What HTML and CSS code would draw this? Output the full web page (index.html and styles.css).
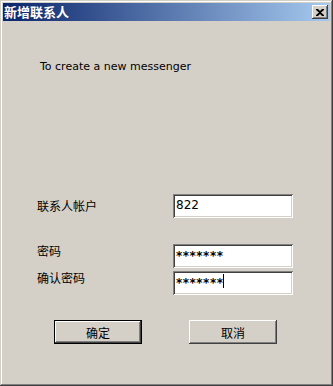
FILE: index.html
```html
<!DOCTYPE html>
<html>
<head>
<meta charset="utf-8">
<link rel="stylesheet" href="styles.css">
</head>
<body>
<div class="window">
  <div class="titlebar">
    <span class="title">新增联系人</span>
    <span class="close"><svg width="8" height="7" viewBox="0 0 8 7"><path d="M0 0h2l2 2 2-2h2v1L5 3.5 8 6v1H6L4 5 2 7H0V6l3-2.5L0 1z" fill="#000"/></svg></span>
  </div>
  <div class="content">
    <div class="message">To create a new messenger</div>
    <div class="form">
      <div class="row">
        <div class="label">联系人帐户</div>
        <div class="field">822</div>
      </div>
      <div class="row row2">
        <div class="label up">密码</div>
        <div class="field pw">*******</div>
      </div>
      <div class="row row3">
        <div class="label up">确认密码</div>
        <div class="field pw">*******<span class="caret"></span></div>
      </div>
    </div>
    <div class="buttons">
      <div class="btn default"><span>确定</span></div>
      <div class="btn"><span>取消</span></div>
    </div>
  </div>
</div>
</body>
</html>
```
FILE: styles.css
```css
html, body {
  margin: 0;
  padding: 0;
  background: #d4d0c8;
}
.window {
  width: 333px;
  height: 386px;
  box-sizing: border-box;
  padding: 3px;
  background: #d4d0c8;
  box-shadow: inset -1px -1px #404040, inset 1px 1px #d4d0c8, inset -2px -2px #808080, inset 2px 2px #ffffff;
  font-family: "DejaVu Sans", "Noto Sans CJK SC", sans-serif;
  color: #000;
  display: flex;
  flex-direction: column;
}
.titlebar {
  height: 18px;
  background: linear-gradient(to right, #0a246a, #a6caf0);
  display: flex;
  align-items: center;
  justify-content: space-between;
  padding: 0 2px 0 1px;
}
.title {
  color: #fff;
  font-family: "Noto Sans CJK SC", sans-serif;
  font-weight: bold;
  font-size: 13px;
  line-height: 18px;
}
.close {
  width: 16px;
  height: 14px;
  box-sizing: border-box;
  background: #d4d0c8;
  box-shadow: inset -1px -1px #404040, inset 1px 1px #ffffff, inset -2px -2px #808080;
  display: flex;
  align-items: center;
  justify-content: center;
}
.content {
  padding-left: 34px;
}
.message {
  margin-top: 39px;
  margin-left: 3px;
  font-size: 11px;
  line-height: 14px;
}
.form {
  margin-top: 120px;
}
.row {
  display: flex;
  height: 24px;
}
.row2 { margin-top: 26px; }
.row3 { margin-top: 3px; }
.label {
  width: 136px;
  font-family: "Noto Sans CJK SC", sans-serif;
  font-size: 12px;
  line-height: 24px;
}
.label.up {
  line-height: 14px;
}
.field {
  width: 120px;
  height: 24px;
  box-sizing: border-box;
  background: #fff;
  box-shadow: inset 1px 1px #808080, inset -1px -1px #ffffff, inset 2px 2px #404040, inset -2px -2px #d4d0c8;
  padding: 3px 0 0 3px;
  font-size: 12px;
  line-height: 16px;
  display: flex;
  align-items: flex-start;
}
.field.pw {
  font-family: "DejaVu Sans", sans-serif;
  font-size: 12px;
  font-weight: bold;
  letter-spacing: 0.5px;
  line-height: 16px;
  padding-top: 4px;
}
.caret {
  display: inline-block;
  width: 1px;
  height: 14px;
  background: #000;
  margin-left: 0;
  margin-top: -1px;
}
.buttons {
  display: flex;
  margin-top: 25px;
  padding-left: 17px;
  gap: 47px;
}
.btn {
  width: 88px;
  height: 24px;
  box-sizing: border-box;
  background: #d4d0c8;
  box-shadow: inset -1px -1px #404040, inset 1px 1px #ffffff, inset -2px -2px #808080;
  display: flex;
  align-items: center;
  justify-content: center;
  font-family: "Noto Sans CJK SC", sans-serif;
  font-size: 12px;
}
.btn.default {
  box-shadow: inset 0 0 0 1px #000, inset -2px -2px #404040, inset 2px 2px #ffffff, inset -3px -3px #808080;
}
```
